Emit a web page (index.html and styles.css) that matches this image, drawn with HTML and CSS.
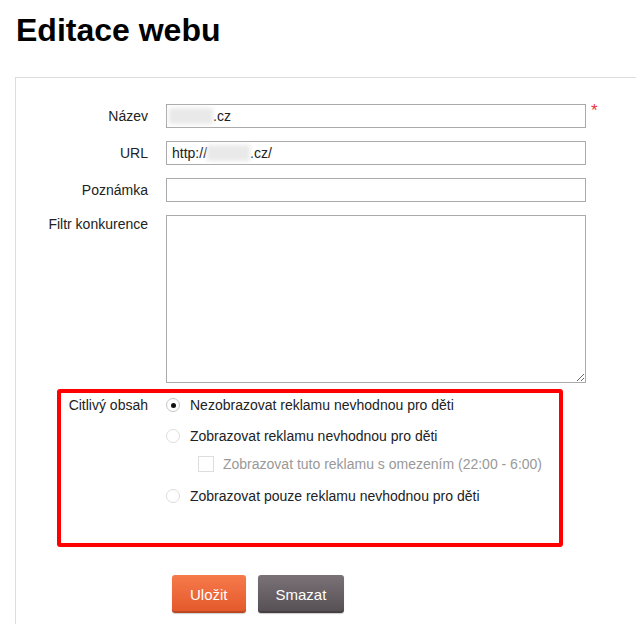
FILE: index.html
```html
<!DOCTYPE html>
<html lang="cs">
<head>
    <meta charset="UTF-8">
    <meta name="viewport" content="width=device-width, initial-scale=1.0">
    <title>Editace webu</title>
    <link rel="stylesheet" href="styles.css">
</head>
<body>
    <div class="page">
        <h1>Editace webu</h1>
        <div class="panel">
            <form class="web-form">
                <div class="fields">
                    <label class="lbl">Název</label>
                    <div class="input"><span class="blur blur-name"></span>.cz</div>
                    <span class="req">*</span>

                    <label class="lbl">URL</label>
                    <div class="input">http://<span class="blur blur-url"></span>.cz/</div>
                    <span></span>

                    <label class="lbl">Poznámka</label>
                    <div class="input"></div>
                    <span></span>

                    <label class="lbl lbl-top">Filtr konkurence</label>
                    <textarea class="area"></textarea>
                    <span></span>
                </div>

                <div class="sensitive">
                    <div class="lbl lbl-sens">Citlivý obsah</div>
                    <div class="options">
                        <div class="opt"><span class="radio on"></span>Nezobrazovat reklamu nevhodnou pro děti</div>
                        <div class="opt opt-2"><span class="radio"></span>Zobrazovat reklamu nevhodnou pro děti</div>
                        <div class="opt opt-check"><span class="check"></span>Zobrazovat tuto reklamu s omezením (22:00 - 6:00)</div>
                        <div class="opt opt-3"><span class="radio"></span>Zobrazovat pouze reklamu nevhodnou pro děti</div>
                    </div>
                </div>

                <div class="actions">
                    <button type="button" class="btn btn-save">Uložit</button>
                    <button type="button" class="btn btn-delete">Smazat</button>
                </div>
            </form>
        </div>
    </div>
</body>
</html>
```

FILE: styles.css
```css
body {
    margin: 0;
    font-family: "Liberation Sans", Arial, sans-serif;
    font-size: 14px;
    color: #222;
    background: #fff;
    overflow: hidden;
}
.page {
    padding-left: 15px;
}
h1 {
    font-size: 32px;
    line-height: 37px;
    margin: 12px 0 28px 1px;
    color: #000;
}
.panel {
    border: 1px solid #dcdcdc;
    border-right: none;
    border-bottom: none;
    padding-top: 26px;
    min-height: 520px;
}
.fields {
    display: grid;
    grid-template-columns: 150px 420px 30px;
    row-gap: 13px;
}
.lbl {
    text-align: right;
    padding-right: 18px;
    line-height: 24px;
}
.lbl-top {
    line-height: 19px;
}
.input {
    height: 24px;
    box-sizing: border-box;
    border: 1px solid #aaa;
    padding: 0 5px;
    line-height: 22px;
    white-space: nowrap;
}
.blur {
    display: inline-block;
    height: 16px;
    vertical-align: -3px;
    background: #e9e9e9;
    filter: blur(2px);
}
.blur-name {
    width: 44px;
    margin-left: -3px;
}
.blur-url {
    width: 43px;
}
.req {
    color: #e8333a;
    font-size: 17px;
    line-height: 14px;
    padding-left: 5px;
}
.area {
    display: block;
    width: 420px;
    height: 168px;
    box-sizing: border-box;
    margin: 0;
    border: 1px solid #aaa;
    font: inherit;
}
.sensitive {
    display: grid;
    grid-template-columns: 105px 1fr;
    box-sizing: border-box;
    width: 506px;
    height: 158px;
    margin: 6px 0 0 41px;
    padding-top: 2px;
    border: 4px solid #f00;
    border-radius: 3px;
}
.lbl-sens {
    line-height: 20px;
}
.opt {
    display: flex;
    align-items: center;
    height: 20px;
    line-height: 20px;
    white-space: nowrap;
}
.opt-2 {
    margin-top: 11px;
}
.opt-check {
    margin-top: 8px;
    padding-left: 32px;
    color: #999;
}
.opt-3 {
    margin-top: 12px;
}
.radio {
    position: relative;
    width: 14px;
    height: 14px;
    box-sizing: border-box;
    border: 1px solid #ddd;
    border-radius: 50%;
    margin-right: 10px;
}
.radio.on {
    border-color: #c4c4c4;
}
.radio.on::after {
    content: "";
    position: absolute;
    left: 3.5px;
    top: 3.5px;
    width: 5px;
    height: 5px;
    border-radius: 50%;
    background: #111;
}
.check {
    width: 16px;
    height: 16px;
    box-sizing: border-box;
    border: 1px solid #ddd;
    margin-right: 9px;
}
.actions {
    display: flex;
    gap: 12px;
    margin-top: 28px;
    padding-left: 156px;
}
.btn {
    height: 38px;
    padding: 0 18px;
    border: none;
    border-radius: 3px;
    font-family: inherit;
    font-size: 15px;
    color: #fff;
    cursor: pointer;
    box-shadow: inset 0 -2px 0 rgba(0, 0, 0, 0.18), 0 1px 1px rgba(0, 0, 0, 0.2);
}
.btn-save {
    background: linear-gradient(#f67a4a, #e3582b);
}
.btn-delete {
    background: linear-gradient(#7a7276, #554e52);
}
```
